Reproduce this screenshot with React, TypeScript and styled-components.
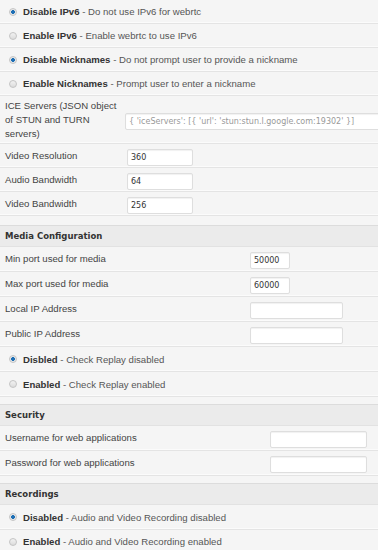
import React from "react";
import styled, { createGlobalStyle } from "styled-components";

const GlobalStyle = createGlobalStyle`
  body {
    margin: 0;
    background: #f5f5f5;
    font-family: "Liberation Sans", Arial, sans-serif;
    color: #444;
  }
`;

const Page = styled.div`
  display: flex;
  flex-direction: column;
  width: 378px;
  overflow: hidden;
`;

const Section = styled.div<{ $gap?: number }>`
  display: flex;
  flex-direction: column;
  margin-top: ${(p) => p.$gap ?? 0}px;
`;

const Header = styled.div`
  height: 20px;
  display: flex;
  align-items: center;
  padding-left: 5px;
  background: #ebebeb;
  border-top: 1px solid #dcdcdc;
  border-bottom: 1px solid #e2e2e2;
  font-family: "DejaVu Sans", Verdana, sans-serif;
  font-weight: bold;
  font-size: 8.5px;
  color: #333;
`;

const Row = styled.div<{ $cols: string; $h?: number }>`
  display: grid;
  grid-template-columns: ${(p) => p.$cols};
  align-items: center;
  min-height: ${(p) => p.$h ?? 23}px;
  border-bottom: 1px solid #e4e4e4;
  box-shadow: inset 0 -1px 0 #fbfbfb;
`;

const Label = styled.div`
  padding-left: 5px;
  font-size: 9.6px;
  line-height: 14px;
  color: #444;
`;

const InputCell = styled.div<{ $shift?: number }>`
  padding-left: ${(p) => p.$shift ?? 0}px;
`;

const TextInput = styled.input<{ $w: number }>`
  box-sizing: border-box;
  width: ${(p) => p.$w}px;
  height: 17px;
  padding: 0 3px;
  border: 1px solid #dedede;
  border-radius: 2px;
  box-shadow: inset 0 1px 1px rgba(0, 0, 0, 0.06);
  background: #fff;
  font-family: "DejaVu Sans", Verdana, sans-serif;
  font-size: 8px;
  color: #333;
  outline: none;
  &::placeholder {
    color: #999;
  }
`;

const OptionRow = styled.label<{ $h?: number }>`
  display: flex;
  align-items: center;
  gap: 6px;
  height: ${(p) => p.$h ?? 23}px;
  padding-left: 9px;
  border-bottom: 1px solid #e4e4e4;
  box-shadow: inset 0 -1px 0 #fbfbfb;
  font-size: 9.6px;
  color: #555;
`;

const Radio = styled.span<{ $on?: boolean }>`
  width: 8px;
  height: 8px;
  border-radius: 50%;
  box-sizing: border-box;
  border: 1px solid #c4c4c4;
  background: ${(p) =>
    p.$on
      ? "radial-gradient(circle, #1e6fb5 0 1.6px, #e9e9e9 2.2px)"
      : "linear-gradient(#f2f2f2, #dcdcdc)"};
`;

const Strong = styled.b`
  color: #333;
  font-weight: bold;
`;

function Option({ on, title, text, h }: { on?: boolean; title: string; text: string; h?: number }) {
  return (
    <OptionRow $h={h}>
      <Radio $on={on} />
      <span>
        <Strong>{title}</Strong> - {text}
      </span>
    </OptionRow>
  );
}

function Field({
  cols,
  label,
  width,
  value,
  placeholder,
  h,
  shift,
}: {
  cols: string;
  label: React.ReactNode;
  width: number;
  value?: string;
  placeholder?: string;
  h?: number;
  shift?: number;
}) {
  return (
    <Row $cols={cols} $h={h}>
      <Label>{label}</Label>
      <InputCell $shift={shift}>
        <TextInput $w={width} defaultValue={value} placeholder={placeholder} />
      </InputCell>
    </Row>
  );
}

const general = "125px 1fr";
const media = "250px 1fr";
const security = "270px 1fr";

export default function App() {
  return (
    <Page>
      <GlobalStyle />
      <Section>
        <Option on title="Disable IPv6" text="Do not use IPv6 for webrtc" />
        <Option title="Enable IPv6" text="Enable webrtc to use IPv6" />
        <Option on title="Disable Nicknames" text="Do not prompt user to provide a nickname" />
        <Option title="Enable Nicknames" text="Prompt user to enter a nickname" />
        <Field
          cols={general}
          h={47}
          label="ICE Servers (JSON object of STUN and TURN servers)"
          width={270}
          placeholder="{ 'iceServers': [{ 'url': 'stun:stun.l.google.com:19302' }]"
        />
        <Field cols={general} label="Video Resolution" width={66} value="360" shift={2} />
        <Field cols={general} label="Audio Bandwidth" width={66} value="64" shift={2} />
        <Field cols={general} label="Video Bandwidth" width={66} value="256" shift={2} />
      </Section>

      <Section $gap={9}>
        <Header>Media Configuration</Header>
        <Field cols={media} h={24} label="Min port used for media" width={40} value="50000" />
        <Field cols={media} h={24} label="Max port used for media" width={40} value="60000" />
        <Field cols={media} h={24} label="Local IP Address" width={93} />
        <Field cols={media} h={24} label="Public IP Address" width={93} />
        <Option h={24} on title="Disbled" text="Check Replay disabled" />
        <Option h={24} title="Enabled" text="Check Replay enabled" />
      </Section>

      <Section $gap={7}>
        <Header>Security</Header>
        <Field cols={security} h={24} label="Username for web applications" width={97} />
        <Field cols={security} h={24} label="Password for web applications" width={97} />
      </Section>

      <Section $gap={7}>
        <Header>Recordings</Header>
        <Option h={24} on title="Disabled" text="Audio and Video Recording disabled" />
        <Option title="Enabled" text="Audio and Video Recording enabled" />
      </Section>
    </Page>
  );
}
